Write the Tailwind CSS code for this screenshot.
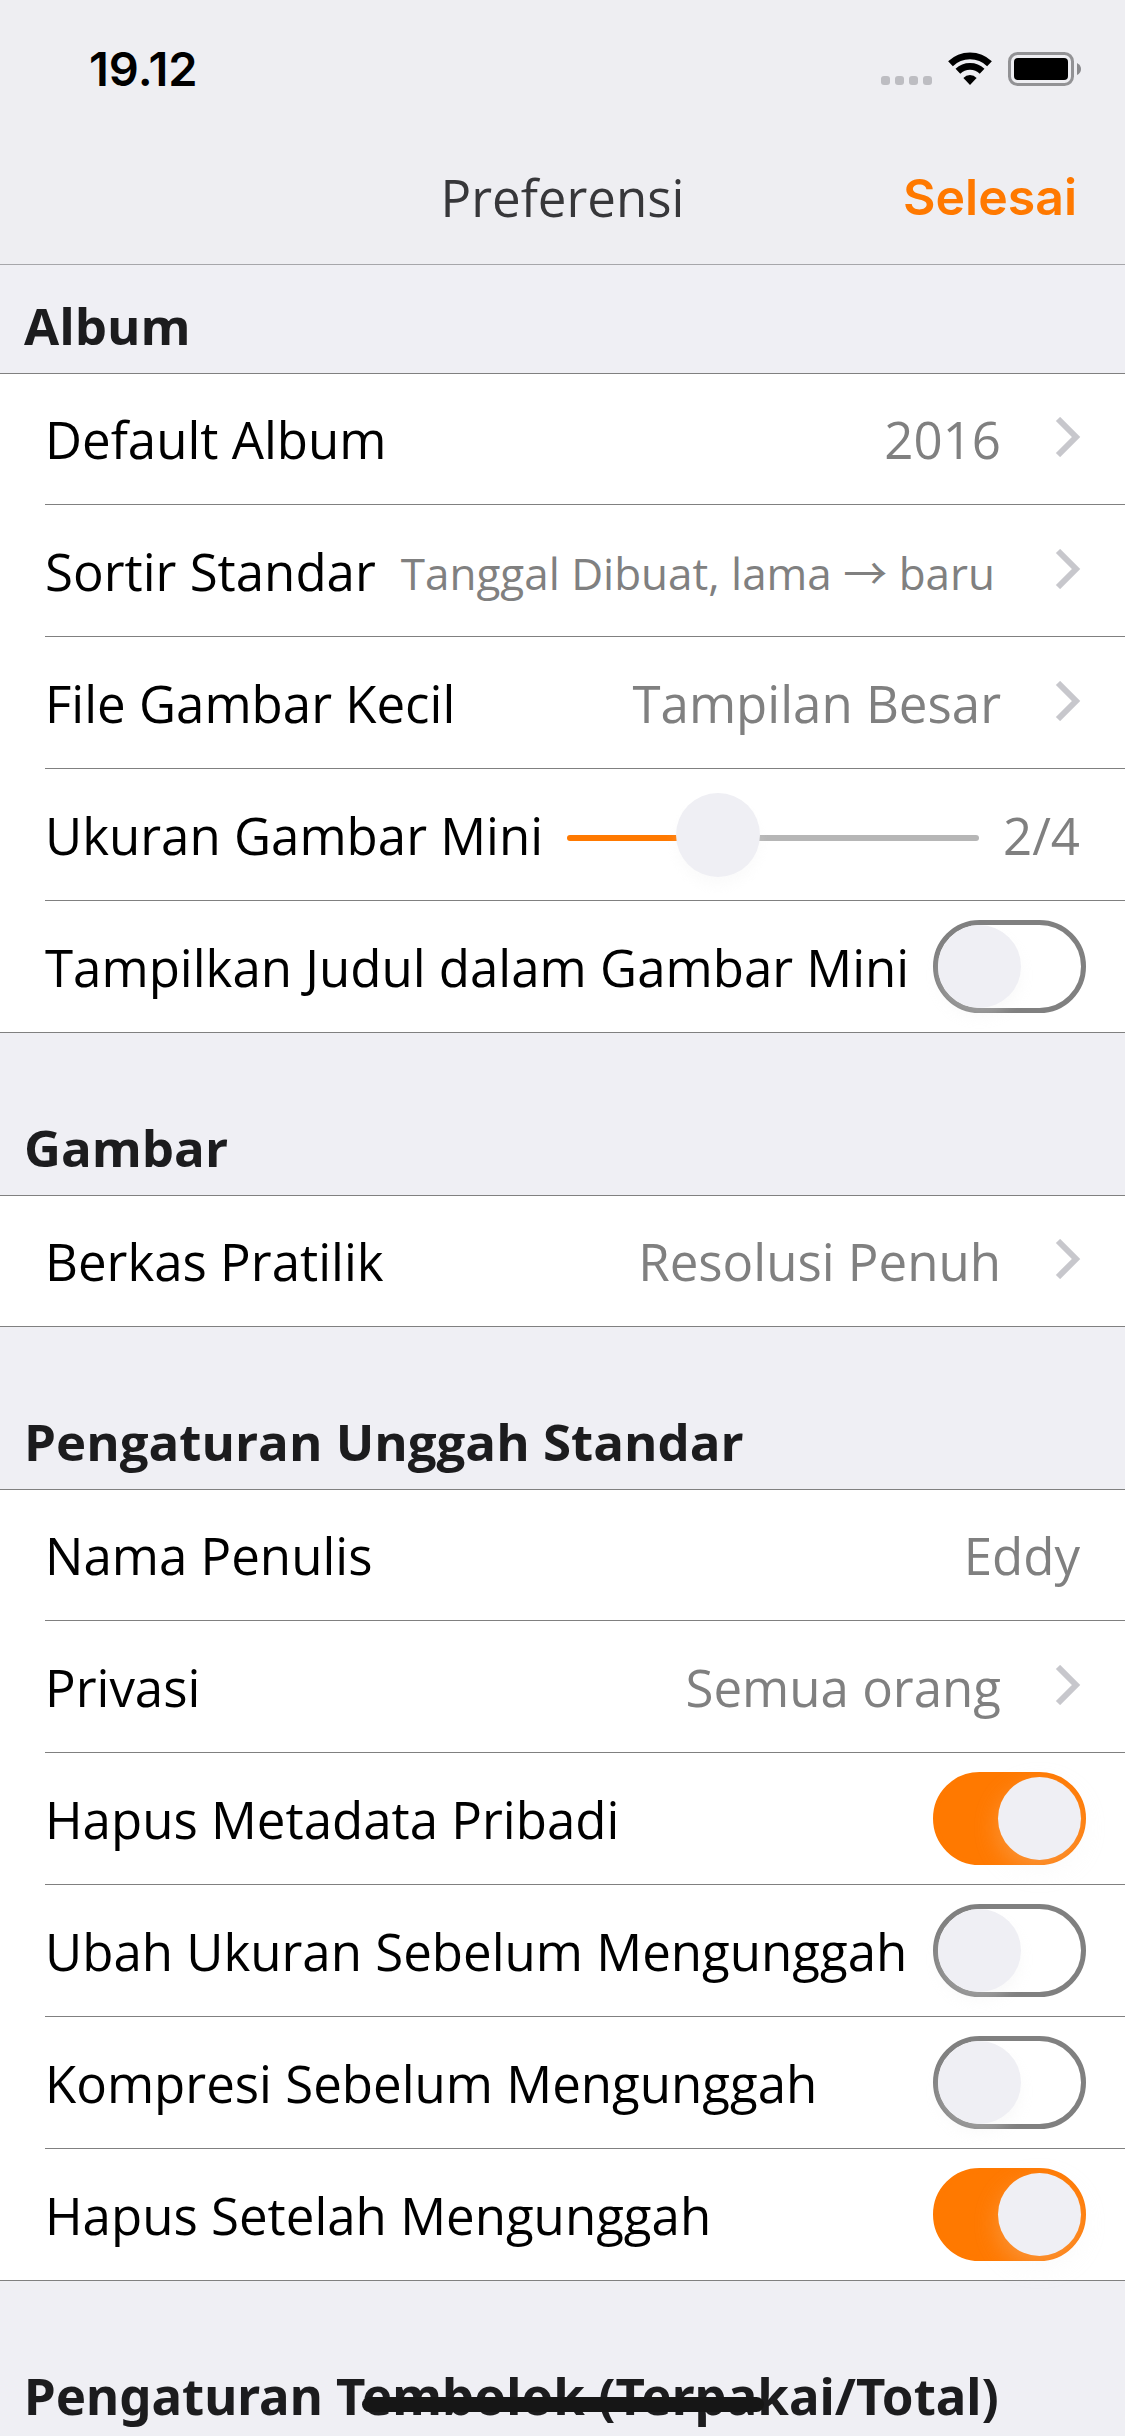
<!DOCTYPE html>
<html lang="id">
<head>
<meta charset="utf-8">
<meta name="viewport" content="width=device-width, initial-scale=1">
<title>Preferensi</title>
<script src="https://cdn.jsdelivr.net/npm/@tailwindcss/browser@4"></script>
</head>
<body class="flex h-screen flex-col overflow-hidden bg-[#efeff4] font-['Open_Sans','Noto_Sans_CJK_JP',sans-serif] text-[51px] leading-[70px] text-black">

<header class="shrink-0 border-b border-[#a6a6aa] bg-[#eeeef2]">
  <div class="flex h-[132px] items-center justify-between pt-[6px] pr-[43px] pl-[89px]">
    <time class="font-['Inter',sans-serif] text-[47px] leading-[54px] font-semibold">19.12</time>
    <div class="flex items-center">
      <svg class="h-[34px] w-[51px]" viewBox="0 0 51 34" fill="#bdbdc2" aria-hidden="true">
        <rect x="0" y="24" width="9" height="9" rx="3"/><rect x="14" y="24" width="9" height="9" rx="3"/><rect x="28" y="24" width="9" height="9" rx="3"/><rect x="42" y="24" width="9" height="9" rx="3"/>
      </svg>
      <svg class="ml-[15px] h-[34px] w-[46px]" viewBox="0 0 46 34" fill="none" stroke="#000" stroke-width="6.8" aria-hidden="true">
        <path d="M3.5 11.7A28 28 0 0 1 42.5 11.7"/>
        <path d="M10.9 19.3A17.4 17.4 0 0 1 35.1 19.3"/>
        <path d="M16.4 26A9 9 0 0 1 29.6 26L23 33Z" fill="#000" stroke="none"/>
      </svg>
      <svg class="ml-[15px] h-[34px] w-[74px]" viewBox="0 0 74 34" aria-hidden="true">
        <rect x="1.5" y="1.5" width="63" height="31" rx="8" fill="none" stroke="#929295" stroke-width="3"/>
        <rect x="6" y="6" width="54" height="22" rx="4" fill="#000"/>
        <path d="M69 11Q73 13 73 17T69 23Z" fill="#8a8a8d"/>
      </svg>
    </div>
  </div>
  <div class="grid h-[132px] grid-cols-[1fr_auto_1fr] items-center px-[48px] pb-[2px]">
    <h1 class="col-start-2 text-[#37373a]">Preferensi</h1>
    <button type="button" class="justify-self-end font-['Inter',sans-serif] text-[50px] leading-[60px] font-semibold text-[#ff7900]">Selesai</button>
  </div>
</header>

<main class="min-h-0 flex-1 overflow-hidden">
  <section>
    <h2 class="px-6 pt-[25px] pb-[13px] font-bold text-[#1c1c1e]">Album</h2>
    <div class="border-y border-[#808080] bg-white pl-[45px]">
      <button type="button" class="flex h-[131px] w-full items-center justify-between border-b border-[#808080] pr-[44px] text-left">
        <span>Default Album</span>
        <span class="flex items-center gap-[54px] text-[#808080]">2016
          <svg class="mb-1 h-[40px] w-[26px]" viewBox="0 0 26 40" fill="none" stroke="#c7c7cc" stroke-width="6" aria-hidden="true"><path d="M3 2L21 20L3 38"/></svg>
        </span>
      </button>
      <button type="button" class="flex h-[132px] w-full items-center justify-between border-b border-[#808080] pr-[44px] text-left">
        <span>Sortir Standar</span>
        <span class="flex items-center gap-[54px] text-[#808080]"><span class="pt-1 pr-[6px] text-[44px]">Tanggal Dibuat, lama → baru</span>
          <svg class="mb-1 h-[40px] w-[26px]" viewBox="0 0 26 40" fill="none" stroke="#c7c7cc" stroke-width="6" aria-hidden="true"><path d="M3 2L21 20L3 38"/></svg>
        </span>
      </button>
      <button type="button" class="flex h-[132px] w-full items-center justify-between border-b border-[#808080] pr-[44px] text-left">
        <span>File Gambar Kecil</span>
        <span class="flex items-center gap-[54px] text-[#808080]">Tampilan Besar
          <svg class="mb-1 h-[40px] w-[26px]" viewBox="0 0 26 40" fill="none" stroke="#c7c7cc" stroke-width="6" aria-hidden="true"><path d="M3 2L21 20L3 38"/></svg>
        </span>
      </button>
      <div class="flex h-[132px] items-center border-b border-[#808080] pr-[45px]">
        <label for="thumb-size">Ukuran Gambar Mini</label>
        <input id="thumb-size" type="range" min="1" max="4" value="2" class="mx-6 mt-[6px] h-[84px] min-w-0 flex-1 appearance-none bg-transparent [&::-webkit-slider-runnable-track]:h-[6px] [&::-webkit-slider-runnable-track]:rounded-full [&::-webkit-slider-runnable-track]:bg-[linear-gradient(to_right,#ff7900_37%,#b6b6b6_37%)] [&::-webkit-slider-thumb]:-mt-[42px] [&::-webkit-slider-thumb]:size-[84px] [&::-webkit-slider-thumb]:appearance-none [&::-webkit-slider-thumb]:rounded-full [&::-webkit-slider-thumb]:bg-[#efeff4] [&::-webkit-slider-thumb]:shadow-[0_9px_12px_rgba(235,235,235,0.2)]">
        <output for="thumb-size" class="text-[#808080]">2/4</output>
      </div>
      <div class="flex h-[131px] items-center justify-between pr-[39px]">
        <label for="show-title">Tampilkan Judul dalam Gambar Mini</label>
        <input id="show-title" type="checkbox" role="switch" class="flex h-[93px] w-[153px] shrink-0 appearance-none rounded-full border-5 border-[#808080] bg-white before:size-[83px] before:rounded-full before:bg-[#efeff4] before:shadow-[0_9px_12px_rgba(235,235,235,0.25)] checked:justify-end checked:border-[#ff7900] checked:bg-[#ff7900]">
      </div>
    </div>
  </section>

  <section>
    <h2 class="px-6 pt-[79px] pb-[13px] font-bold text-[#1c1c1e]">Gambar</h2>
    <div class="border-y border-[#808080] bg-white pl-[45px]">
      <button type="button" class="flex h-[130px] w-full items-center justify-between pr-[44px] text-left">
        <span>Berkas Pratilik</span>
        <span class="flex items-center gap-[54px] text-[#808080]">Resolusi Penuh
          <svg class="mb-1 h-[40px] w-[26px]" viewBox="0 0 26 40" fill="none" stroke="#c7c7cc" stroke-width="6" aria-hidden="true"><path d="M3 2L21 20L3 38"/></svg>
        </span>
      </button>
    </div>
  </section>

  <section>
    <h2 class="px-6 pt-[79px] pb-[13px] font-bold text-[#1c1c1e]">Pengaturan Unggah Standar</h2>
    <div class="border-y border-[#808080] bg-white pl-[45px]">
      <div class="flex h-[131px] items-center border-b border-[#808080] pr-[45px]">
        <label for="author">Nama Penulis</label>
        <input id="author" type="text" value="Eddy" class="min-w-0 flex-1 bg-transparent text-right text-[#808080]">
      </div>
      <button type="button" class="flex h-[132px] w-full items-center justify-between border-b border-[#808080] pr-[44px] text-left">
        <span>Privasi</span>
        <span class="flex items-center gap-[54px] text-[#808080]">Semua orang
          <svg class="mb-1 h-[40px] w-[26px]" viewBox="0 0 26 40" fill="none" stroke="#c7c7cc" stroke-width="6" aria-hidden="true"><path d="M3 2L21 20L3 38"/></svg>
        </span>
      </button>
      <div class="flex h-[132px] items-center justify-between border-b border-[#808080] pr-[39px]">
        <label for="strip-metadata">Hapus Metadata Pribadi</label>
        <input id="strip-metadata" type="checkbox" role="switch" checked class="flex h-[93px] w-[153px] shrink-0 appearance-none rounded-full border-5 border-[#808080] bg-white before:size-[83px] before:rounded-full before:bg-[#efeff4] before:shadow-[0_9px_24px_rgba(235,235,235,0.25)] checked:justify-end checked:border-[#ff7900] checked:bg-[#ff7900]">
      </div>
      <div class="flex h-[132px] items-center justify-between border-b border-[#808080] pr-[39px]">
        <label for="resize">Ubah Ukuran Sebelum Mengunggah</label>
        <input id="resize" type="checkbox" role="switch" class="flex h-[93px] w-[153px] shrink-0 appearance-none rounded-full border-5 border-[#808080] bg-white before:size-[83px] before:rounded-full before:bg-[#efeff4] before:shadow-[0_9px_12px_rgba(235,235,235,0.25)] checked:justify-end checked:border-[#ff7900] checked:bg-[#ff7900]">
      </div>
      <div class="flex h-[132px] items-center justify-between border-b border-[#808080] pr-[39px]">
        <label for="compress">Kompresi Sebelum Mengunggah</label>
        <input id="compress" type="checkbox" role="switch" class="flex h-[93px] w-[153px] shrink-0 appearance-none rounded-full border-5 border-[#808080] bg-white before:size-[83px] before:rounded-full before:bg-[#efeff4] before:shadow-[0_9px_12px_rgba(235,235,235,0.25)] checked:justify-end checked:border-[#ff7900] checked:bg-[#ff7900]">
      </div>
      <div class="flex h-[131px] items-center justify-between pr-[39px]">
        <label for="delete-after">Hapus Setelah Mengunggah</label>
        <input id="delete-after" type="checkbox" role="switch" checked class="flex h-[93px] w-[153px] shrink-0 appearance-none rounded-full border-5 border-[#808080] bg-white before:size-[83px] before:rounded-full before:bg-[#efeff4] before:shadow-[0_9px_24px_rgba(235,235,235,0.25)] checked:justify-end checked:border-[#ff7900] checked:bg-[#ff7900]">
      </div>
    </div>
  </section>

  <section>
    <h2 class="px-6 pt-[79px] font-['Noto_Sans',sans-serif] font-bold text-[#1c1c1e]">Pengaturan Tembolok (Terpakai/Total)</h2>
  </section>
</main>

<!-- Home indicator -->
<div class="fixed bottom-6 left-1/2 h-[15px] w-[402px] -translate-x-1/2 rounded-full bg-[#161616]"></div>
</body>
</html>
